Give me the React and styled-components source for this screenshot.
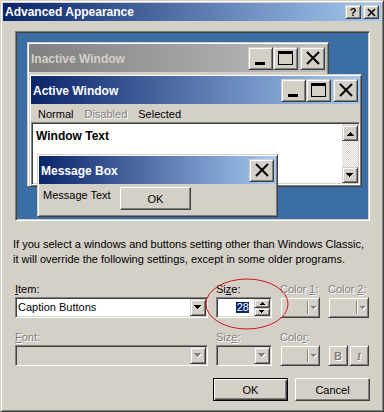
import React from 'react';
import styled, { createGlobalStyle, css } from 'styled-components';

const face = '#d4d0c8';

const GlobalStyle = createGlobalStyle`
  html, body { margin: 0; padding: 0; background: ${face}; }
  body { font-family: "Liberation Sans", Arial, sans-serif; font-size: 11px; color: #000; }
`;

const raised = css`
  border: 1px solid;
  border-color: ${face} #404040 #404040 ${face};
  box-shadow: inset 1px 1px #fff, inset -1px -1px #808080;
`;

const sunken = css`
  border: 1px solid;
  border-color: #808080 #fff #fff #808080;
  box-shadow: inset 1px 1px #404040, inset -1px -1px ${face};
`;

const disabledText = css`
  color: #808080;
  text-shadow: 1px 1px 0 #fff;
`;

const Dialog = styled.div`
  position: relative;
  width: 384px;
  height: 412px;
  box-sizing: border-box;
  ${raised};
  padding: 2px;
  background: ${face};
  display: flex;
  flex-direction: column;
`;

const Caption = styled.div`
  height: ${(p) => p.$h}px;
  flex: none;
  display: flex;
  align-items: center;
  padding: 0 ${(p) => p.$pr}px 0 2px;
  background: linear-gradient(
    to right,
    ${(p) => (p.$inactive ? '#808080, #c0c0c0' : '#0a246a, #a6caf0')}
  );
  color: ${(p) => (p.$inactive ? face : '#fff')};
  font-weight: bold;
  font-size: 12px;
  white-space: nowrap;
`;

const CaptionTitle = styled.span`
  flex: 1;
  overflow: hidden;
  padding-top: ${(p) => p.$nudge || 0}px;
`;

const CapBtn = styled.div`
  width: ${(p) => p.$w}px;
  height: ${(p) => p.$h}px;
  box-sizing: border-box;
  flex: none;
  ${raised};
  background: ${face};
  display: flex;
  align-items: center;
  justify-content: center;
  margin-left: ${(p) => p.$gap || 0}px;
  color: #000;
  font-size: 11px;
  font-weight: bold;
  line-height: 1;
`;

const Body = styled.div`
  flex: 1;
  padding: 10px 11px 0 12px;
  display: flex;
  flex-direction: column;
`;

const Preview = styled.div`
  position: relative;
  width: 355px;
  height: 190px;
  box-sizing: border-box;
  border: 1px solid;
  border-color: #808080 #fff #fff #808080;
  box-shadow: inset 1px 1px #404040, inset -1px -1px ${face};
  background: #3a6ea5;
  flex: none;
`;

const Win = styled.div`
  position: absolute;
  left: ${(p) => p.$x}px;
  top: ${(p) => p.$y}px;
  width: ${(p) => p.$w}px;
  height: ${(p) => p.$h}px;
  box-sizing: border-box;
  ${raised};
  padding: 1px;
  background: ${face};
  display: flex;
  flex-direction: column;
`;

const MenuBar = styled.div`
  height: 18px;
  box-sizing: border-box;
  flex: none;
  display: flex;
  align-items: center;
  gap: 11px;
  padding: 2px 0 0 7px;
  font-size: 11px;
`;

const MenuItem = styled.span`
  ${(p) => p.$disabled && disabledText};
`;

const TextArea = styled.div`
  flex: 1;
  ${sunken};
  padding: 1px;
  background: #fff;
  display: flex;
`;

const WindowText = styled.div`
  flex: 1;
  padding: 5px 0 0 3px;
  font-weight: bold;
  font-size: 12px;
`;

const ScrollBar = styled.div`
  width: 16px;
  flex: none;
  display: flex;
  flex-direction: column;
  justify-content: space-between;
  padding-top: 1px;
  background: repeating-conic-gradient(${face} 0 25%, #fff 0 50%) 0 0 / 2px 2px;
`;

const ScrollBtn = styled.div`
  width: 16px;
  height: 16px;
  box-sizing: border-box;
  ${raised};
  background: ${face};
  display: flex;
  align-items: center;
  justify-content: center;
`;

const MsgBody = styled.div`
  flex: 1;
  display: grid;
  grid-template-columns: 77px 71px;
  align-items: start;
  padding: 3px 0 0 4px;
  font-size: 11px;
`;

const MsgText = styled.span`
  line-height: 15px;
  padding-top: 1px;
`;

const PushButton = styled.div`
  width: ${(p) => p.$w || 75}px;
  height: 23px;
  box-sizing: border-box;
  background: ${face};
  display: flex;
  align-items: center;
  justify-content: center;
  font-size: 11px;
  border: 1px solid;
  border-color: #fff #404040 #404040 #fff;
  box-shadow: inset -1px -1px #808080;
  ${(p) =>
    p.$default &&
    css`
      border-color: #000;
      box-shadow: inset 1px 1px #fff, inset -1px -1px #404040, inset -2px -2px #808080;
    `}
`;

const Description = styled.p`
  margin: 16px 0 0 -2px;
  line-height: 15px;
  font-size: 11px;
  white-space: nowrap;
`;

const Form = styled.div`
  display: grid;
  grid-template-columns: 193px 56px 40px 41px;
  grid-template-rows: 15px 21px 27px 21px;
  column-gap: 8px;
  margin-top: 15px;
`;

const Label = styled.label`
  align-self: end;
  line-height: 15px;
  font-size: 11px;
  white-space: nowrap;
  ${(p) => p.$disabled && disabledText};
`;

const Combo = styled.div`
  height: 21px;
  box-sizing: border-box;
  ${sunken};
  padding: 1px;
  background: ${(p) => (p.$disabled ? face : '#fff')};
  display: flex;
`;

const ComboText = styled.span`
  flex: 1;
  padding-left: 1px;
  line-height: 17px;
  font-size: 11px;
  white-space: nowrap;
  overflow: hidden;
`;

const ArrowBtn = styled.div`
  width: 16px;
  flex: none;
  box-sizing: border-box;
  ${raised};
  background: ${face};
  display: flex;
  align-items: center;
  justify-content: center;
`;

const SpinValue = styled.div`
  flex: 1;
  display: flex;
  justify-content: flex-end;
  align-items: center;
  padding-right: 5px;
`;

const Selection = styled.span`
  background: #0a246a;
  color: #fff;
  line-height: 11px;
  padding: 0 0 0 1px;
  font-size: 11px;
`;

const SpinBtns = styled.div`
  width: 16px;
  flex: none;
  display: flex;
  flex-direction: column;
`;

const SpinHalf = styled.div`
  flex: 1;
  box-sizing: border-box;
  ${raised};
  background: ${face};
  display: flex;
  align-items: center;
  justify-content: center;
`;

const ColorBtn = styled.div`
  height: 21px;
  box-sizing: border-box;
  ${raised};
  background: ${face};
  display: flex;
  padding: 3px 2px 3px 3px;
`;

const Swatch = styled.div`
  flex: 1;
`;

const Separator = styled.div`
  width: 1px;
  flex: none;
  border-left: 1px solid #808080;
  background: #fff;
`;

const SmallArrowBox = styled.div`
  width: 8px;
  flex: none;
  display: flex;
  align-items: center;
  justify-content: flex-end;
`;

const StyleBtns = styled.div`
  display: flex;
  gap: 1px;
`;

const StyleBtn = styled.div`
  width: 20px;
  height: 21px;
  box-sizing: border-box;
  ${raised};
  background: ${face};
  display: flex;
  align-items: center;
  justify-content: center;
  font-weight: bold;
  font-size: 11px;
  font-style: ${(p) => (p.$italic ? 'italic' : 'normal')};
  font-family: ${(p) => (p.$italic ? '"Liberation Serif", serif' : 'inherit')};
  ${disabledText};
`;

const Footer = styled.div`
  display: flex;
  justify-content: flex-end;
  gap: 7px;
  margin-top: 12px;
`;

const Annotation = styled.svg`
  position: absolute;
  left: 203px;
  top: 276px;
  pointer-events: none;
`;

function triPath(n) {
  const W = 2 * n - 1;
  let d = `M0 0H${W}`;
  for (let k = 1; k < n; k++) d += `V${k}H${W - k}`;
  d += `V${n}H${n - 1}`;
  for (let k = n - 1; k >= 1; k--) d += `V${k}H${k - 1}`;
  return d + 'Z';
}

function Arrow({ n = 4, up = false, disabled = false }) {
  const W = 2 * n - 1;
  const d = triPath(n);
  return (
    <svg
      width={W + 1}
      height={n + 1}
      viewBox={`0 0 ${W + 1} ${n + 1}`}
      style={{ transform: up ? 'rotate(180deg)' : 'none', display: 'block' }}
      shapeRendering="crispEdges"
    >
      {disabled && <path d={d} fill="#fff" transform="translate(1 1)" />}
      <path d={d} fill={disabled ? '#808080' : '#000'} />
    </svg>
  );
}

const MinIcon = () => (
  <svg width="14" height="14" viewBox="0 0 14 14" shapeRendering="crispEdges">
    <rect x="1" y="11" width="10" height="3" fill="#000" />
  </svg>
);
const MaxIcon = () => (
  <svg width="15" height="14" viewBox="0 0 15 14" shapeRendering="crispEdges">
    <rect x="0.5" y="0.5" width="14" height="13" fill="none" stroke="#000" />
    <rect x="0" y="0" width="15" height="3" fill="#000" />
  </svg>
);
const CloseIcon = ({ s = 14, w = 2 }) => (
  <svg width={s} height={s} viewBox={`0 0 ${s} ${s}`}>
    <path d={`M1 1L${s - 1} ${s - 1}M${s - 1} 1L1 ${s - 1}`} stroke="#000" strokeWidth={w} />
  </svg>
);

function WindowCaption({ title, inactive, full = true }) {
  return (
    <Caption $h={28} $pr={2} $inactive={inactive}>
      <CaptionTitle $nudge={2}>{title}</CaptionTitle>
      {full && (
        <>
          <CapBtn $w={25} $h={23}>
            <MinIcon />
          </CapBtn>
          <CapBtn $w={25} $h={23}>
            <MaxIcon />
          </CapBtn>
        </>
      )}
      <CapBtn $w={25} $h={23} $gap={full ? 2 : 0}>
        <CloseIcon />
      </CapBtn>
    </Caption>
  );
}

export default function App() {
  return (
    <>
      <GlobalStyle />
      <Dialog>
        <Caption $h={18} $pr={2}>
          <CaptionTitle>Advanced Appearance</CaptionTitle>
          <CapBtn $w={16} $h={14}>?</CapBtn>
          <CapBtn $w={16} $h={14} $gap={2}>
            <CloseIcon s={9} w={1.6} />
          </CapBtn>
        </Caption>
        <Body>
          <Preview>
            <Win $x={11} $y={10} $w={302} $h={145}>
              <WindowCaption title="Inactive Window" inactive />
            </Win>
            <Win $x={13} $y={42} $w={333} $h={113}>
              <WindowCaption title="Active Window" />
              <MenuBar>
                <MenuItem>Normal</MenuItem>
                <MenuItem $disabled>Disabled</MenuItem>
                <MenuItem>Selected</MenuItem>
              </MenuBar>
              <TextArea>
                <WindowText>Window Text</WindowText>
                <ScrollBar>
                  <ScrollBtn>
                    <Arrow n={4} up />
                  </ScrollBtn>
                  <ScrollBtn>
                    <Arrow n={4} />
                  </ScrollBtn>
                </ScrollBar>
              </TextArea>
            </Win>
            <Win $x={21} $y={122} $w={241} $h={63}>
              <WindowCaption title="Message Box" full={false} />
              <MsgBody>
                <MsgText>Message Text</MsgText>
                <PushButton $w={71}>OK</PushButton>
              </MsgBody>
            </Win>
          </Preview>

          <Description>
            If you select a windows and buttons setting other than Windows Classic,
            <br />
            it will override the following settings, except in some older programs.
          </Description>

          <Form>
            <Label>
              <u>I</u>tem:
            </Label>
            <Label>
              Si<u>z</u>e:
            </Label>
            <Label $disabled>
              Color <u>1</u>:
            </Label>
            <Label $disabled>
              Color <u>2</u>:
            </Label>

            <Combo>
              <ComboText>Caption Buttons</ComboText>
              <ArrowBtn>
                <Arrow n={4} />
              </ArrowBtn>
            </Combo>
            <Combo>
              <SpinValue>
                <Selection>28</Selection>
              </SpinValue>
              <SpinBtns>
                <SpinHalf>
                  <Arrow n={3} up />
                </SpinHalf>
                <SpinHalf>
                  <Arrow n={3} />
                </SpinHalf>
              </SpinBtns>
            </Combo>
            <ColorBtn>
              <Swatch />
              <Separator />
              <SmallArrowBox>
                <Arrow n={3} disabled />
              </SmallArrowBox>
            </ColorBtn>
            <ColorBtn>
              <Swatch />
              <Separator />
              <SmallArrowBox>
                <Arrow n={3} disabled />
              </SmallArrowBox>
            </ColorBtn>

            <Label $disabled>
              <u>F</u>ont:
            </Label>
            <Label $disabled>
              Siz<u>e</u>:
            </Label>
            <Label $disabled>
              Colo<u>r</u>:
            </Label>
            <span />

            <Combo $disabled>
              <ComboText />
              <ArrowBtn>
                <Arrow n={4} disabled />
              </ArrowBtn>
            </Combo>
            <Combo $disabled>
              <ComboText />
              <ArrowBtn>
                <Arrow n={4} disabled />
              </ArrowBtn>
            </Combo>
            <ColorBtn>
              <Swatch />
              <Separator />
              <SmallArrowBox>
                <Arrow n={3} disabled />
              </SmallArrowBox>
            </ColorBtn>
            <StyleBtns>
              <StyleBtn>B</StyleBtn>
              <StyleBtn $italic>I</StyleBtn>
            </StyleBtns>
          </Form>

          <Footer>
            <PushButton $default>OK</PushButton>
            <PushButton>Cancel</PushButton>
          </Footer>
        </Body>
        <Annotation width="86" height="55" viewBox="0 0 86 55">
          <ellipse cx="43" cy="27" rx="41" ry="25" fill="none" stroke="#d01818" strokeWidth="1" />
        </Annotation>
      </Dialog>
    </>
  );
}
